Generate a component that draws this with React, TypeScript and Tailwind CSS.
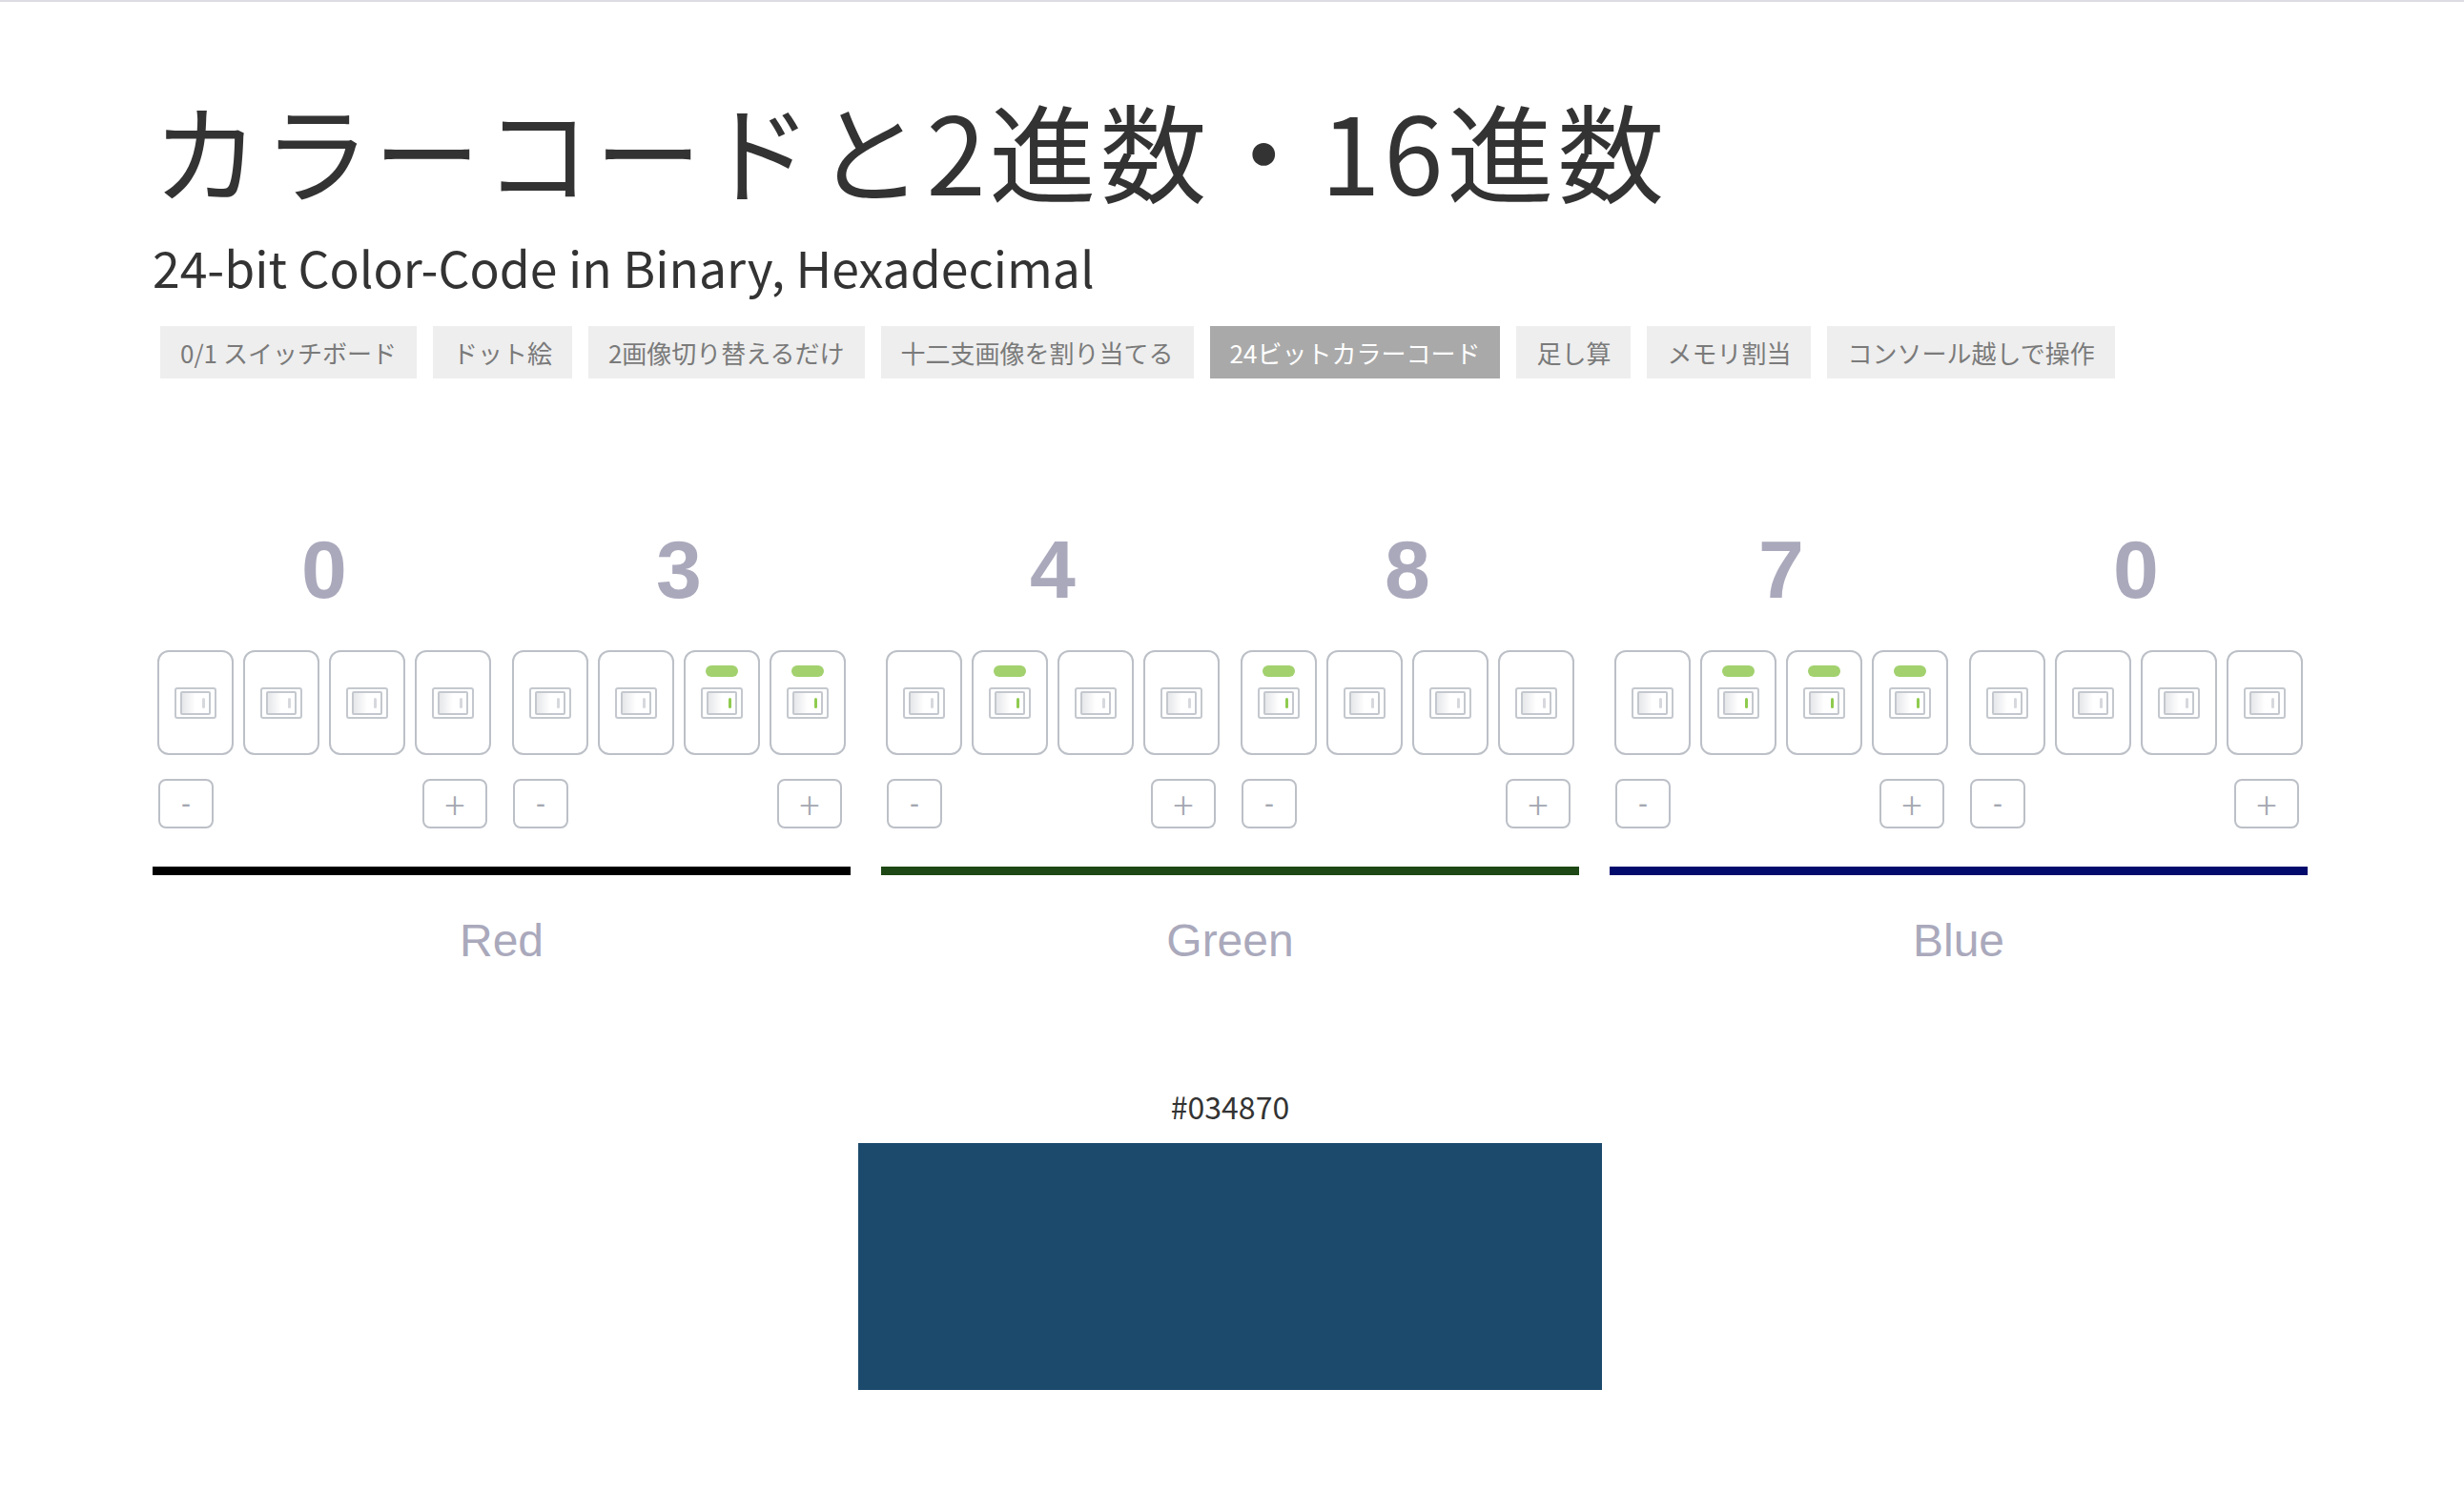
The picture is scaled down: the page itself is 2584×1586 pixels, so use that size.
import React from 'react';

const JP = "font-['Noto_Sans_CJK_JP','Noto_Sans',sans-serif]";

const TABS = [
    { label: '0/1 スイッチボード', active: false },
    { label: 'ドット絵', active: false },
    { label: '2画像切り替えるだけ', active: false },
    { label: '十二支画像を割り当てる', active: false },
    { label: '24ビットカラーコード', active: true },
    { label: '足し算', active: false },
    { label: 'メモリ割当', active: false },
    { label: 'コンソール越しで操作', active: false },
];

const CHANNELS = [
    { name: 'Red', hex: '03', bar: 'bg-black' },
    { name: 'Green', hex: '48', bar: 'bg-[#1d4714]' },
    { name: 'Blue', hex: '70', bar: 'bg-[#020a6c]' },
];

const toBits = (digit: string) =>
    parseInt(digit, 16)
        .toString(2)
        .padStart(4, '0')
        .split('')
        .map((b) => b === '1');

const Switch = ({ on }: { on: boolean }) => (
    <div className="flex h-[110px] w-[80px] flex-col items-center rounded-[12px] border-2 border-[#bcc0c7] bg-white">
        <div
            className={
                on
                    ? 'mt-[14px] h-[12px] w-[34px] rounded-full bg-[#a2d16e]'
                    : 'mt-[14px] h-[12px] w-[34px] rounded-full'
            }
        />
        <div className="mt-[11px] flex h-[33px] w-[44px] items-center justify-center rounded-[3px] border-2 border-[#c4c8ce] bg-white">
            <div className="flex h-[25px] w-[32px] items-center justify-end rounded-[2px] border-2 border-[#c4c8ce] bg-gradient-to-r from-[#e6e7ea] via-white to-white pr-[4px]">
                <div
                    className={
                        on
                            ? 'h-[11px] w-[3px] rounded-sm bg-[#8fcb4f]'
                            : 'h-[11px] w-[3px] rounded-sm bg-[#d6d8dd]'
                    }
                />
            </div>
        </div>
    </div>
);

const Nibble = ({ digit }: { digit: string }) => (
    <div className="flex w-[350px] flex-col">
        <div className="text-center font-['Liberation_Sans',sans-serif] text-[86px] font-bold leading-none text-[#aaa9bc]">
            {digit}
        </div>
        <div className="mt-[42px] flex gap-[10px]">
            {toBits(digit).map((on, i) => (
                <Switch key={i} on={on} />
            ))}
        </div>
        <div className="mt-[25px] flex items-center justify-between pl-[1px] pr-[4px]">
            <button className="flex h-[52px] w-[58px] items-center justify-center rounded-[8px] border-2 border-[#bcc0c7] font-['Liberation_Sans',sans-serif] text-[30px] leading-none text-[#a3a7b0]">
                -
            </button>
            <button className={`flex h-[52px] w-[68px] items-center justify-center rounded-[8px] border-2 border-[#bcc0c7] ${JP} text-[40px] font-light leading-none text-[#a3a7b0]`}>
                +
            </button>
        </div>
    </div>
);

export default function App() {
    return (
        <div className="min-h-screen border-t-2 border-[#dcdce2] bg-white">
            <main className="pb-[120px] pl-[160px] pr-[164px]">
                <h1 className={`mt-[98px] ${JP} text-[112px] font-normal leading-none tracking-[0.035em] text-[#333333]`}>
                    カラーコードと2進数・16進数
                </h1>
                <p className={`mt-[42px] ${JP} text-[51.7px] leading-none text-[#333333]`}>
                    24-bit Color-Code in Binary, Hexadecimal
                </p>

                <nav className="ml-[8px] mt-[36px] flex gap-[17px]">
                    {TABS.map((tab) => (
                        <a
                            key={tab.label}
                            className={
                                tab.active
                                    ? `flex h-[55px] items-center bg-[#a9a9a9] px-[21px] ${JP} text-[26px] text-white`
                                    : `flex h-[55px] items-center bg-[#eeeeee] px-[21px] ${JP} text-[26px] text-[#7a7a7a]`
                            }
                        >
                            {tab.label}
                        </a>
                    ))}
                </nav>

                <section className="mt-[157px] grid grid-cols-3 gap-[32px]">
                    {CHANNELS.map((ch) => (
                        <div key={ch.name} className="flex flex-col">
                            <div className="flex justify-between px-[5px]">
                                <Nibble digit={ch.hex[0]} />
                                <Nibble digit={ch.hex[1]} />
                            </div>
                            <div className={`mt-[40px] h-[9px] ${ch.bar}`} />
                            <div className="mt-[45px] text-center font-['Liberation_Sans',sans-serif] text-[48px] leading-none text-[#aaa9bc]">
                                {ch.name}
                            </div>
                        </div>
                    ))}
                </section>

                <div className="mt-[133px] flex flex-col items-center">
                    <div className={`${JP} text-[32px] leading-none text-[#333333]`}>#034870</div>
                    <div className="mt-[23px] h-[259px] w-[780px] bg-[#1c4a6d]" />
                </div>
            </main>
        </div>
    );
}
